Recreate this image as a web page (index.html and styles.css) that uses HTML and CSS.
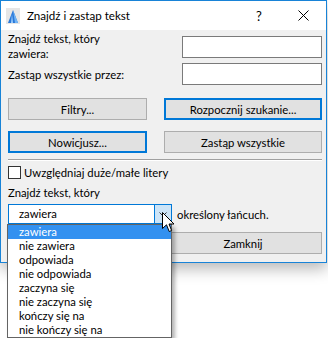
FILE: index.html
```html
<!DOCTYPE html>
<html lang="pl">
<head>
    <meta charset="UTF-8">
    <title>Znajdź i zastąp tekst</title>
    <link rel="stylesheet" href="styles.css">
</head>
<body>
    <div class="window">
        <div class="titlebar">
            <svg class="app-icon" width="14" height="16" viewBox="0 0 14 16">
                <rect x="0" y="0" width="14" height="16" fill="#e6e6e6"/>
                <path d="M2 15 L7 2 L12 15 Z" fill="#2a78d8"/>
                <path d="M7 2 L9 15 L12 15 Z" fill="#6fb3f5"/>
                <path d="M6 6 L7 15 L5 15 Z" fill="#9fd0ff"/>
            </svg>
            <span class="title">Znajdź i zastąp tekst</span>
            <span class="help">?</span>
            <svg class="close" width="11" height="11" viewBox="0 0 11 11">
                <path d="M0.5 0.5 L10.5 10.5 M10.5 0.5 L0.5 10.5" stroke="#000" stroke-width="1"/>
            </svg>
        </div>

        <div class="content">
            <div class="row row-find">
                <label class="label">Znajdź tekst, który<br>zawiera:</label>
                <input class="field" type="text">
            </div>
            <div class="row row-replace">
                <label class="label">Zastąp wszystkie przez:</label>
                <input class="field" type="text">
            </div>

            <div class="buttons">
                <button class="btn">Filtry...</button>
                <button class="btn btn-blue">Rozpocznij szukanie...</button>
                <button class="btn btn-blue">Nowicjusz...</button>
                <button class="btn">Zastąp wszystkie</button>
            </div>

            <div class="separator"></div>

            <label class="check"><span class="box"></span>Uwzględniaj duże/małe litery</label>

            <div class="label mode-label">Znajdź tekst, który</div>
            <div class="mode-row">
                <div class="combo">
                    <span class="combo-value">zawiera</span>
                    <span class="combo-arrow">
                        <svg width="8" height="5" viewBox="0 0 8 5"><path d="M0.5 0.5 L4 4 L7.5 0.5" fill="none" stroke="#333" stroke-width="1"/></svg>
                    </span>
                </div>
                <span class="mode-text">określony łańcuch.</span>
            </div>

            <div class="close-row">
                <button class="btn">Zamknij</button>
            </div>
        </div>

        <ul class="dropdown">
            <li class="selected">zawiera</li>
            <li>nie zawiera</li>
            <li>odpowiada</li>
            <li>nie odpowiada</li>
            <li>zaczyna się</li>
            <li>nie zaczyna się</li>
            <li>kończy się na</li>
            <li>nie kończy się na</li>
        </ul>

        <svg class="cursor" width="13" height="21" viewBox="0 0 13 21">
            <path d="M0.5 0.5 L0.5 16.5 L4.5 12.8 L7.2 19.5 L9.6 18.5 L7 12 L12 12 Z" fill="#fff" stroke="#000" stroke-width="1" stroke-linejoin="miter"/>
        </svg>
    </div>
</body>
</html>
```

FILE: styles.css
```css
html {
    height: 100%;
    background: #fff;
}
body {
    margin: 0;
    min-height: 100%;
    background: #fff;
    font-family: Lato, "Noto Sans", sans-serif;
    font-size: 11.3px;
    color: #000;
}
.window {
    position: relative;
    width: 325px;
    border: 1px solid #1883d7;
    background: #f0f0f0;
    box-shadow: 0 6px 14px rgba(0, 0, 0, 0.28);
}
.titlebar {
    height: 29px;
    background: #fff;
    display: flex;
    align-items: center;
}
.app-icon {
    margin-left: 5px;
    margin-top: 1px;
}
.title {
    margin-left: 7px;
    flex: 1;
    font-size: 11.6px;
}
.help {
    width: 6px;
    margin-right: 36px;
    font-size: 13px;
}
.close {
    margin-right: 17px;
}
.content {
    padding: 1px 4px 8px 7px;
}
.row {
    display: flex;
    justify-content: space-between;
}
.label {
    line-height: 15px;
}
.row-find {
    height: 30px;
}
.row-find .field {
    margin-top: 5px;
}
.row-replace {
    margin-top: 2px;
    align-items: center;
}
.field {
    box-sizing: border-box;
    width: 140px;
    height: 22px;
    margin: 0;
    border: 1px solid #7a7a7a;
    background: #fff;
}
.buttons {
    display: grid;
    grid-template-columns: 139px 158px;
    column-gap: 17px;
    row-gap: 11px;
    margin-top: 13px;
}
.btn {
    box-sizing: border-box;
    height: 22px;
    margin: 0;
    padding: 0;
    font-family: inherit;
    font-size: 11.3px;
    color: #000;
    background: #e1e1e1;
    border: 1px solid #adadad;
}
.btn-blue {
    border: 2px solid #0078d7;
}
.separator {
    margin-top: 6px;
    height: 1px;
    background: #a0a0a0;
    border-bottom: 1px solid #fff;
}
.check {
    display: flex;
    align-items: center;
    margin-top: 5px;
    height: 13px;
}
.box {
    box-sizing: border-box;
    width: 13px;
    height: 13px;
    border: 1px solid #333;
    background: #fff;
    margin-right: 3px;
}
.mode-label {
    margin-top: 6px;
}
.mode-row {
    display: flex;
    align-items: center;
    margin-top: 4px;
}
.combo {
    box-sizing: border-box;
    display: flex;
    width: 164px;
    height: 20px;
    border: 1px solid #0078d7;
    background: #fff;
}
.combo-value {
    flex: 1;
    padding-left: 10px;
    line-height: 18px;
}
.combo-arrow {
    width: 16px;
    display: flex;
    align-items: center;
    justify-content: center;
    background: #cce4f7;
    border-left: 1px solid #0078d7;
}
.mode-text {
    margin-left: 5px;
}
.close-row {
    display: flex;
    justify-content: flex-end;
    margin-top: 8px;
}
.close-row .btn {
    width: 158px;
}
.dropdown {
    position: absolute;
    left: 6px;
    top: 223px;
    width: 163px;
    margin: 0;
    padding: 0;
    list-style: none;
    background: #fff;
    border: 1px solid #646464;
    box-shadow: 3px 3px 4px rgba(0, 0, 0, 0.3);
}
.dropdown li {
    height: 14px;
    line-height: 14px;
    padding-left: 11px;
}
.dropdown .selected {
    background: #3391f0;
    color: #fff;
}
.cursor {
    position: absolute;
    left: 161px;
    top: 211px;
}
```
